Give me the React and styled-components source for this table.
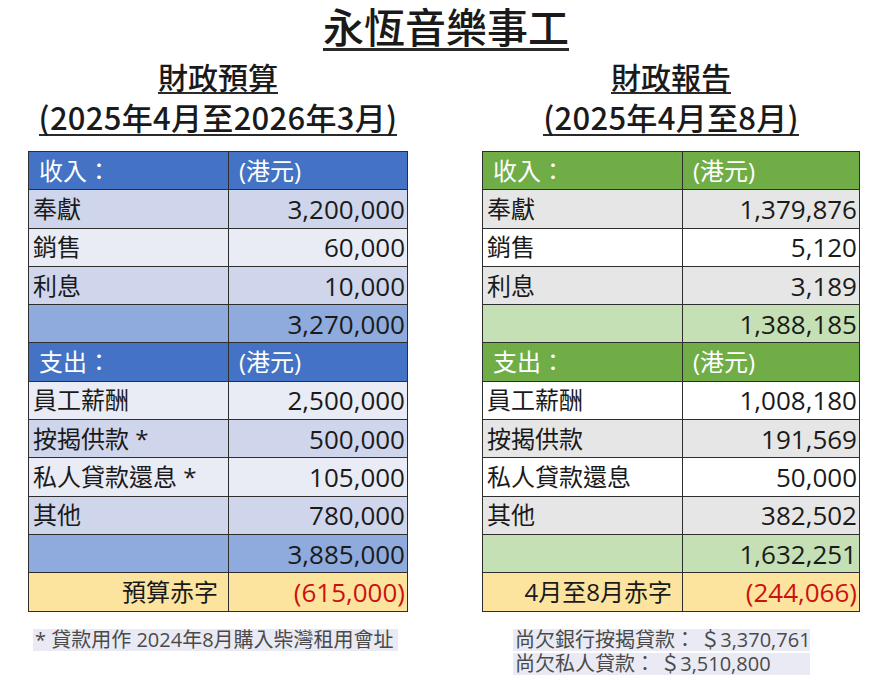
import React from "react";
import styled, { createGlobalStyle } from "styled-components";

const Global = createGlobalStyle`
  html, body { margin: 0; padding: 0; background: #fff; }
  body { font-family: "Noto Sans CJK TC", "Noto Sans", sans-serif; color: #1a1a1a; }
`;

const Page = styled.div`
  width: 892px;
  height: 680px;
  overflow: hidden;
  display: flex;
  flex-direction: column;
  align-items: center;
  padding-top: 3px;
  box-sizing: border-box;
`;

const Title = styled.h1`
  margin: 0;
  font-family: "Noto Sans CJK TC", sans-serif;
  font-weight: 500;
  font-size: 41px;
  line-height: 45px;
  color: #1a1a1a;
  white-space: nowrap;
  border-bottom: 3px solid #2a2a2a;
`;

const Columns = styled.div`
  align-self: stretch;
  display: grid;
  grid-template-columns: 380px 378px;
  column-gap: 74px;
  padding-left: 28px;
  margin-top: 9px;
`;

const Column = styled.section`
  display: flex;
  flex-direction: column;
  align-items: center;
`;

const Heading = styled.h2`
  margin: 0;
  font-family: "Noto Sans CJK TC", sans-serif;
  font-weight: 500;
  font-size: 30px;
  line-height: 32px;
  color: #1a1a1a;
  white-space: nowrap;
  border-bottom: 2px solid #2a2a2a;
`;

const Period = styled.h3`
  margin: 6px 0 0;
  font-family: "Noto Sans CJK TC", sans-serif;
  font-weight: 500;
  font-size: 31px;
  line-height: 34px;
  letter-spacing: 0.3px;
  color: #1a1a1a;
  white-space: nowrap;
  border-bottom: 2px solid #2a2a2a;
`;

const Table = styled.table`
  margin-top: 15px;
  width: 100%;
  border-collapse: collapse;
  table-layout: fixed;
  font-family: "Open Sans", "Noto Sans CJK TC", sans-serif;
  border: 1.5px solid #2e2e2e;
`;

const Col = styled.col`
  width: ${(p) => p.$w};
`;

const Row = styled.tr`
  height: 38.3px;
  background: ${(p) => p.$bg};
`;

const Cell = styled.td`
  box-sizing: border-box;
  border-top: 1.5px solid #2e2e2e;
  border-bottom: 1.5px solid #2e2e2e;
  border-left: 1px solid #2e2e2e;
  border-right: 1px solid #2e2e2e;
  padding: 0 ${(p) => (p.$right ? "2px" : "4px")} 0 ${(p) => p.$padL || "4px"};
  text-align: ${(p) => (p.$right ? "right" : "left")};
  vertical-align: middle;
  white-space: nowrap;
  overflow: hidden;
  color: ${(p) => p.$color || "#1a1a1a"};
  font-size: ${(p) => (p.$num ? "26px" : "24px")};
  line-height: 30px;
`;

const DeficitLabel = styled(Cell)`
  text-align: right;
  padding-right: 10px;
`;

const Notes = styled.div`
  align-self: stretch;
  margin-top: 17px;
  padding-left: ${(p) => p.$indent};
  display: flex;
  flex-direction: column;
  align-items: flex-start;
  gap: 2px;
`;

const Note = styled.div`
  background: #e9eaf4;
  color: #4a4a4a;
  font-family: "Open Sans", "Noto Sans CJK TC", sans-serif;
  font-size: 20px;
  line-height: 22px;
  padding: 0 4px 0 2px;
  width: ${(p) => p.$w || "auto"};
  box-sizing: border-box;
  white-space: nowrap;
`;

const themes = {
  blue: { head: "#4472c4", a: "#cfd5ea", b: "#e9ebf5", total: "#8faadc", def: "#fce49f" },
  green: { head: "#70ad47", a: "#e7e6e6", b: "#ffffff", total: "#c5e0b4", def: "#fce49f" },
};

function FinanceTable({ theme, income, incomeTotal, expenses, expenseTotal, deficitLabel, deficit }) {
  const t = themes[theme];
  const header = (label) => (
    <Row $bg={t.head}>
      <Cell $padL="10px" $color="#ffffff">{label}</Cell>
      <Cell $padL="10px" $color="#ffffff">(港元)</Cell>
    </Row>
  );
  const lines = (items) =>
    items.map(([label, value, shade]) => (
      <Row key={label} $bg={t[shade]}>
        <Cell>{label}</Cell>
        <Cell $right $num>{value}</Cell>
      </Row>
    ));
  const total = (value) => (
    <Row $bg={t.total}>
      <Cell />
      <Cell $right $num>{value}</Cell>
    </Row>
  );
  return (
    <Table>
      <colgroup>
        <Col $w="200px" />
        <Col $w="auto" />
      </colgroup>
      <tbody>
        {header("收入：")}
        {lines(income)}
        {total(incomeTotal)}
        {header("支出：")}
        {lines(expenses)}
        {total(expenseTotal)}
        <Row $bg={t.def}>
          <DeficitLabel>{deficitLabel}</DeficitLabel>
          <Cell $right $num $color="#cc1111">{deficit}</Cell>
        </Row>
      </tbody>
    </Table>
  );
}

export default function App() {
  return (
    <>
      <Global />
      <Page>
        <Title>永恆音樂事工</Title>
        <Columns>
          <Column>
            <Heading>財政預算</Heading>
            <Period>(2025年4月至2026年3月)</Period>
            <FinanceTable
              theme="blue"
              income={[
                ["奉獻", "3,200,000", "a"],
                ["銷售", "60,000", "b"],
                ["利息", "10,000", "a"],
              ]}
              incomeTotal="3,270,000"
              expenses={[
                ["員工薪酬", "2,500,000", "b"],
                ["按揭供款 *", "500,000", "a"],
                ["私人貸款還息 *", "105,000", "b"],
                ["其他", "780,000", "a"],
              ]}
              expenseTotal="3,885,000"
              deficitLabel="預算赤字"
              deficit="(615,000)"
            />
            <Notes $indent="5px">
              <Note>* 貸款用作 2024年8月購入柴灣租用會址</Note>
            </Notes>
          </Column>
          <Column>
            <Heading>財政報告</Heading>
            <Period>(2025年4月至8月)</Period>
            <FinanceTable
              theme="green"
              income={[
                ["奉獻", "1,379,876", "a"],
                ["銷售", "5,120", "b"],
                ["利息", "3,189", "a"],
              ]}
              incomeTotal="1,388,185"
              expenses={[
                ["員工薪酬", "1,008,180", "b"],
                ["按揭供款", "191,569", "a"],
                ["私人貸款還息", "50,000", "b"],
                ["其他", "382,502", "a"],
              ]}
              expenseTotal="1,632,251"
              deficitLabel="4月至8月赤字"
              deficit="(244,066)"
            />
            <Notes $indent="31px">
              <Note $w="297px">尚欠銀行按揭貸款： ＄3,370,761</Note>
              <Note $w="297px">尚欠私人貸款： ＄3,510,800</Note>
            </Notes>
          </Column>
        </Columns>
      </Page>
    </>
  );
}
